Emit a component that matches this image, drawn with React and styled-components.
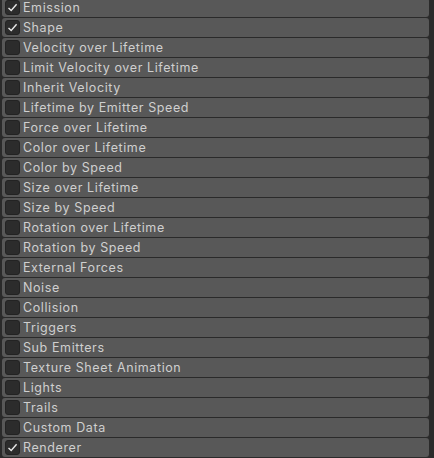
import React from 'react';
import styled, { createGlobalStyle } from 'styled-components';

const GlobalStyle = createGlobalStyle`
  html, body {
    margin: 0;
    background: #2a2a2a;
    overflow: hidden;
  }
`;

const List = styled.div`
  display: flex;
  flex-direction: column;
  gap: 1px;
  margin-top: -2px;
  padding: 0 5px 0 2px;
  font-family: Inter, "Noto Sans", sans-serif;
`;

const Row = styled.div`
  display: flex;
  align-items: center;
  height: 19px;
  background: #585858;
  border-radius: 3px;
  padding-left: 3px;
  box-sizing: border-box;
`;

const Box = styled.div`
  width: 15px;
  height: 15px;
  box-sizing: border-box;
  background: #2c2c2c;
  border: 1px solid #232323;
  border-radius: 3px;
  display: flex;
  align-items: center;
  justify-content: center;
  flex-shrink: 0;
`;

const Label = styled.span`
  margin-left: 3px;
  font-size: 12.5px;
  letter-spacing: 0.6px;
  color: #cfcfcf;
  white-space: nowrap;
`;

const modules = [
  ['Emission', true],
  ['Shape', true],
  ['Velocity over Lifetime'],
  ['Limit Velocity over Lifetime'],
  ['Inherit Velocity'],
  ['Lifetime by Emitter Speed'],
  ['Force over Lifetime'],
  ['Color over Lifetime'],
  ['Color by Speed'],
  ['Size over Lifetime'],
  ['Size by Speed'],
  ['Rotation over Lifetime'],
  ['Rotation by Speed'],
  ['External Forces'],
  ['Noise'],
  ['Collision'],
  ['Triggers'],
  ['Sub Emitters'],
  ['Texture Sheet Animation'],
  ['Lights'],
  ['Trails'],
  ['Custom Data'],
  ['Renderer', true],
];

function Check() {
  return (
    <svg width="11" height="11" viewBox="0 0 11 11">
      <path d="M1.5 6 L4.2 8.4 L9.6 2.2" fill="none" stroke="#e8e8e8" strokeWidth="1.4" />
    </svg>
  );
}

export default function App() {
  return (
    <>
      <GlobalStyle />
      <List>
        {modules.map(([name, on]) => (
          <Row key={name}>
            <Box>{on && <Check />}</Box>
            <Label>{name}</Label>
          </Row>
        ))}
      </List>
    </>
  );
}
